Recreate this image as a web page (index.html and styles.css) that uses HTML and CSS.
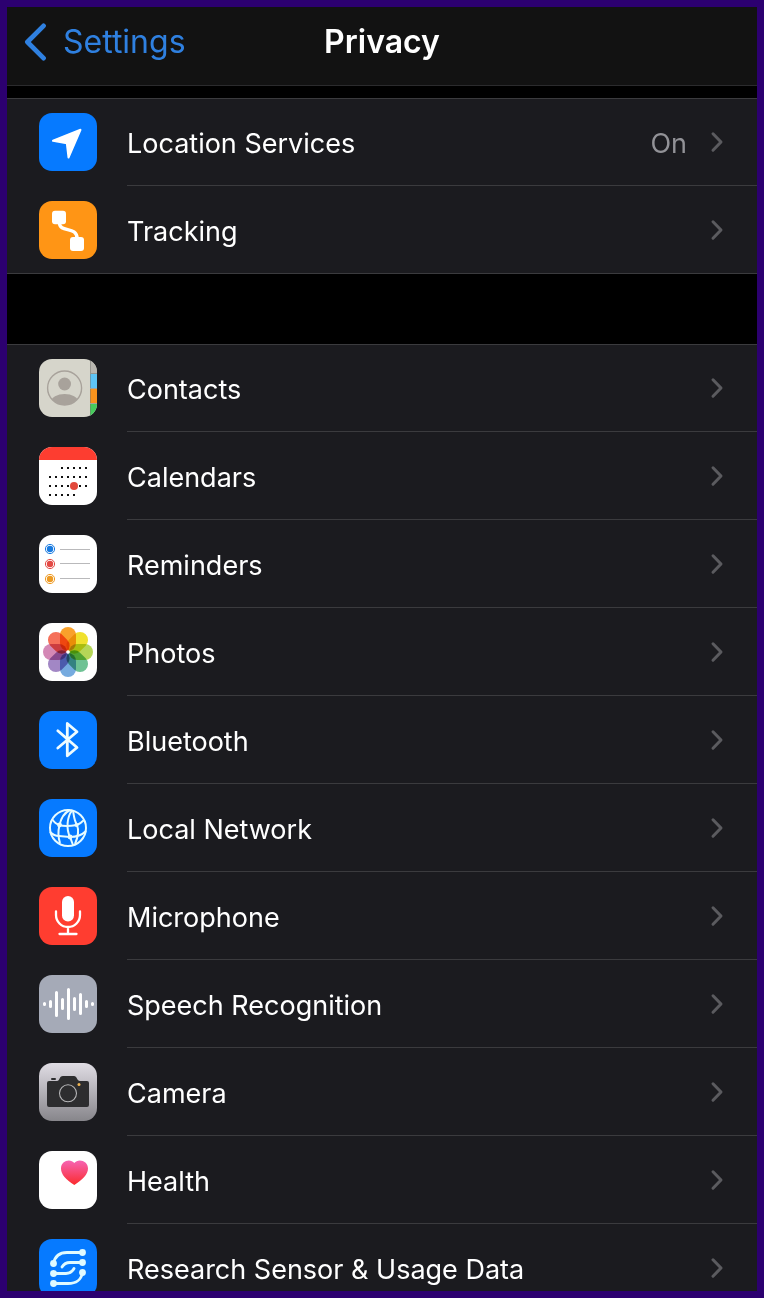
FILE: index.html
```html
<!DOCTYPE html>
<html lang="en">
<head>
  <meta charset="UTF-8" />
  <meta name="viewport" content="width=device-width, initial-scale=1" />
  <title>Privacy</title>
  <link rel="stylesheet" href="styles.css">
</head>
<body>

<svg class="defs" aria-hidden="true">
  <symbol id="chevron" viewBox="0 0 14 22">
    <path d="M3 2.8 L11 11 L3 19.2" fill="none" stroke="currentColor" stroke-width="3" stroke-linecap="round" stroke-linejoin="round"/>
  </symbol>
</svg>

<div class="screen">
  <header class="navbar">
    <a class="back" href="#">
      <svg class="back-icon" viewBox="0 0 24 40" aria-hidden="true">
        <path d="M21 3 L4 20 L21 37" fill="none" stroke="currentColor" stroke-width="5" stroke-linecap="round" stroke-linejoin="round"/>
      </svg>
      <span>Settings</span>
    </a>
    <h1 class="title">Privacy</h1>
  </header>

  <main class="content">
    <ul class="group">
      <li><a class="row" href="#">
        <svg class="icon" viewBox="0 0 58 58" aria-hidden="true">
          <rect width="58" height="58" fill="#067aff"/>
          <path d="M41.5 16.8 L14 27.8 L27.8 30.2 L29.5 44.5 Z" fill="#fff" stroke="#fff" stroke-width="2" stroke-linejoin="round"/>
        </svg>
        <span class="body"><span class="label">Location Services</span><span class="value">On</span><svg class="chevron"><use href="#chevron"/></svg></span>
      </a></li>
      <li><a class="row" href="#">
        <svg class="icon" viewBox="0 0 58 58" aria-hidden="true">
          <rect width="58" height="58" fill="#ff9515"/>
          <rect x="13" y="9.7" width="14" height="13.6" rx="3" fill="#fff"/>
          <rect x="31" y="36" width="14" height="14" rx="3" fill="#fff"/>
          <path d="M20.5 22 C20.5 32 38 25 38 37" fill="none" stroke="#fff" stroke-width="3.4"/>
        </svg>
        <span class="body"><span class="label">Tracking</span><svg class="chevron"><use href="#chevron"/></svg></span>
      </a></li>
    </ul>

    <ul class="group">
      <li><a class="row" href="#">
        <svg class="icon" viewBox="0 0 58 58" aria-hidden="true">
          <clipPath id="avatar"><circle cx="25.6" cy="29" r="17"/></clipPath>
          <rect width="58" height="58" fill="#d6d5cb"/>
          <rect x="51" width="7" height="15" fill="#b9b7b0"/>
          <rect x="51" y="15" width="7" height="14" fill="#5ec4f5"/>
          <rect x="51" y="30" width="7" height="14" fill="#f8931d"/>
          <rect x="51" y="45" width="7" height="13" fill="#46cc5c"/>
          <path d="M51.5 0 V58 M51 14.5 H58 M51 29.5 H58 M51 44.5 H58" stroke="#77766f" stroke-width="1" opacity=".5"/>
          <circle cx="25.6" cy="29" r="17" fill="none" stroke="#a8a29b" stroke-width="1.4"/>
          <circle cx="25.6" cy="25" r="6.4" fill="#a8a29b"/>
          <ellipse cx="25.6" cy="43" rx="13.5" ry="8" fill="#a8a29b" clip-path="url(#avatar)"/>
        </svg>
        <span class="body"><span class="label">Contacts</span><svg class="chevron"><use href="#chevron"/></svg></span>
      </a></li>
      <li><a class="row" href="#">
        <svg class="icon" viewBox="0 0 58 58" aria-hidden="true">
          <rect width="58" height="58" fill="#fff"/>
          <rect width="58" height="13" fill="#fd3d30"/>
          <path d="M22 21 H48 M10 30 H48 M10 39 H48 M10 48 H36" stroke="#111" stroke-width="2" stroke-dasharray="2 4"/>
          <circle cx="35" cy="39" r="4" fill="#e2493c"/>
        </svg>
        <span class="body"><span class="label">Calendars</span><svg class="chevron"><use href="#chevron"/></svg></span>
      </a></li>
      <li><a class="row" href="#">
        <svg class="icon" viewBox="0 0 58 58" aria-hidden="true">
          <rect width="58" height="58" fill="#fff"/>
          <g stroke-width="1">
            <circle cx="11" cy="14" r="4.6" fill="none" stroke="#1a7be0"/><circle cx="11" cy="14" r="3.2" fill="#1a7be0"/>
            <circle cx="11" cy="29" r="4.6" fill="none" stroke="#e34a45"/><circle cx="11" cy="29" r="3.2" fill="#e34a45"/>
            <circle cx="11" cy="44" r="4.6" fill="none" stroke="#ed9a23"/><circle cx="11" cy="44" r="3.2" fill="#ed9a23"/>
          </g>
          <path d="M21 14.5 H51 M21 28.5 H51 M21 43.5 H51" stroke="#b9b9bb" stroke-width="1"/>
        </svg>
        <span class="body"><span class="label">Reminders</span><svg class="chevron"><use href="#chevron"/></svg></span>
      </a></li>
      <li><a class="row" href="#">
        <svg class="icon" viewBox="0 0 58 58" aria-hidden="true">
          <rect width="58" height="58" fill="#fff"/>
          <g class="petals" transform="translate(29 29)">
            <rect x="-8" y="-25" width="16" height="24" rx="8" fill="#f9a12b"/>
            <rect x="-8" y="-25" width="16" height="24" rx="8" fill="#f0e12e" transform="rotate(45)"/>
            <rect x="-8" y="-25" width="16" height="24" rx="8" fill="#b5d657" transform="rotate(90)"/>
            <rect x="-8" y="-25" width="16" height="24" rx="8" fill="#6fc294" transform="rotate(135)"/>
            <rect x="-8" y="-25" width="16" height="24" rx="8" fill="#76abdf" transform="rotate(180)"/>
            <rect x="-8" y="-25" width="16" height="24" rx="8" fill="#a287c5" transform="rotate(225)"/>
            <rect x="-8" y="-25" width="16" height="24" rx="8" fill="#d488b5" transform="rotate(270)"/>
            <rect x="-8" y="-25" width="16" height="24" rx="8" fill="#f5705a" transform="rotate(315)"/>
          </g>
          <circle cx="29" cy="29" r="1.8" fill="#fff"/>
        </svg>
        <span class="body"><span class="label">Photos</span><svg class="chevron"><use href="#chevron"/></svg></span>
      </a></li>
      <li><a class="row" href="#">
        <svg class="icon" viewBox="0 0 58 58" aria-hidden="true">
          <rect width="58" height="58" fill="#067aff"/>
          <path d="M18.8 19.8 L38 36.5 L28.3 44.8 V12.5 L38 20.8 L18.8 37" fill="none" stroke="#effcff" stroke-width="2.8" stroke-linecap="round" stroke-linejoin="round"/>
        </svg>
        <span class="body"><span class="label">Bluetooth</span><svg class="chevron"><use href="#chevron"/></svg></span>
      </a></li>
      <li><a class="row" href="#">
        <svg class="icon" viewBox="0 0 58 58" aria-hidden="true">
          <rect width="58" height="58" fill="#067aff"/>
          <g fill="none" stroke="#e6fbff" stroke-width="2">
            <circle cx="29" cy="29" r="18"/>
            <path d="M31 11 C25 14 22 19 20.5 26 C19 32 19 38 21 44"/>
            <path d="M33 11.500 C28 18 27 30 31 38 L34 46"/>
            <path d="M34 11.500 C35 17 35 21 38 26 C40 31 39 38 36 45"/>
            <path d="M13 20 C15 23 17 25 20.500 26 C26 28 32 27 38 26 C41 25 43 23 45 21"/>
            <path d="M11 33 C14 36 17 37 20 37 L31 38 C37 38 43 36 47 32"/>
          </g>
          <g fill="#e6fbff">
            <circle cx="20.5" cy="26" r="2.4"/>
            <circle cx="37.5" cy="26" r="2"/>
            <circle cx="31" cy="38" r="2.4"/>
          </g>
        </svg>
        <span class="body"><span class="label">Local Network</span><svg class="chevron"><use href="#chevron"/></svg></span>
      </a></li>
      <li><a class="row" href="#">
        <svg class="icon" viewBox="0 0 58 58" aria-hidden="true">
          <rect width="58" height="58" fill="#ff3d30"/>
          <rect x="23" y="9" width="12" height="25.5" rx="6" fill="#fff"/>
          <path d="M17 24.5 V28 A12 12 0 0 0 41 28 V24.5 M29 40 V47 M20.5 47 H37.5" fill="none" stroke="#fff" stroke-width="2.3" stroke-linecap="round"/>
        </svg>
        <span class="body"><span class="label">Microphone</span><svg class="chevron"><use href="#chevron"/></svg></span>
      </a></li>
      <li><a class="row" href="#">
        <svg class="icon" viewBox="0 0 58 58" aria-hidden="true">
          <rect width="58" height="58" fill="#a5aab7"/>
          <path d="M5.5 28.5 V29.5 M11.5 26.5 V31.5 M17.5 17.5 V40.5 M23.5 24.5 V33.5 M29.5 14.5 V43.5 M35.5 23.5 V34.5 M41.5 19.5 V38.5 M47.5 26.5 V31.5 M53.5 28.5 V29.5" stroke="#fff" stroke-width="3" stroke-linecap="round"/>
        </svg>
        <span class="body"><span class="label">Speech Recognition</span><svg class="chevron"><use href="#chevron"/></svg></span>
      </a></li>
      <li><a class="row" href="#">
        <svg class="icon" viewBox="0 0 58 58" aria-hidden="true">
          <linearGradient id="metal" x2="0" y2="1"><stop offset="0" stop-color="#e0dde4"/><stop offset="1" stop-color="#87868b"/></linearGradient>
          <rect width="58" height="58" fill="url(#metal)"/>
          <path d="M10 18 H18 C21 18 20 13 24 13 H35 C38 13 38 18 41 18 H48 Q50 18 50 20 V42 Q50 44 48 44 H10 Q8 44 8 42 V20 Q8 18 10 18 Z" fill="#2d2d2f"/>
          <rect x="12" y="15" width="5" height="2" rx="1" fill="#2d2d2f"/>
          <circle cx="29" cy="30.3" r="8.5" fill="none" stroke="#b4b4b6" stroke-width="1.1"/>
          <circle cx="40" cy="21.5" r="1.5" fill="#f0b552"/>
        </svg>
        <span class="body"><span class="label">Camera</span><svg class="chevron"><use href="#chevron"/></svg></span>
      </a></li>
      <li><a class="row" href="#">
        <svg class="icon" viewBox="0 0 58 58" aria-hidden="true">
          <linearGradient id="heart" x2="0" y2="1"><stop offset="0" stop-color="#f664b4"/><stop offset="1" stop-color="#fb2b2d"/></linearGradient>
          <rect width="58" height="58" fill="#fff"/>
          <path d="M35.3 34 C27 28.5 22 23.5 22 17.5 C22 9.5 31.5 7 35.3 12 C39.1 7 49 9.5 49 17.5 C49 23.5 43.5 28.5 35.3 34 Z" fill="url(#heart)"/>
        </svg>
        <span class="body"><span class="label">Health</span><svg class="chevron"><use href="#chevron"/></svg></span>
      </a></li>
      <li><a class="row" href="#">
        <svg class="icon" viewBox="0 0 58 58" aria-hidden="true">
          <rect width="58" height="58" fill="#067aff"/>
          <path d="M14.5 24.5 C16 17 20 13.5 28 13.5 H43.5 M23 28 C25 24.5 27 23.5 31 23.5 H43.5 M14.5 34.5 H27 C31 34.5 33 33 35 29.5 M14.5 44.5 H29 C38 44.5 42 41 43.5 33.5" fill="none" stroke="#dffaff" stroke-width="2.8" stroke-linecap="round"/>
          <g fill="#dffaff">
            <circle cx="14.5" cy="24.5" r="3.4"/><circle cx="43.5" cy="13.5" r="3.4"/>
            <circle cx="43.5" cy="23.5" r="3.4"/><circle cx="14.5" cy="34.5" r="3.4"/>
            <circle cx="14.5" cy="44.5" r="3.4"/><circle cx="43.5" cy="33.5" r="3.4"/>
          </g>
        </svg>
        <span class="body"><span class="label">Research Sensor &amp; Usage Data</span><svg class="chevron"><use href="#chevron"/></svg></span>
      </a></li>
    </ul>
  </main>
</div>

</body>
</html>
```

FILE: styles.css
```css
:root {
  --frame-color: #2c0070;
  --bar-bg: #121212;
  --row-bg: #1b1b1f;
  --line-color: #3b3b3e;
  --link-color: #2f80e0;
  --muted-color: #929297;
  --chevron-color: #5b5b5f;
}

* {
  box-sizing: border-box;
}

body {
  margin: 0;
  background: #000;
  color: #fff;
  font-family: Inter, "Liberation Sans", sans-serif;
}

.defs {
  display: none;
}

.screen {
  display: flex;
  flex-direction: column;
  height: 100vh;
  border: 7px solid var(--frame-color);
  overflow: hidden;
}

.navbar {
  display: grid;
  grid-template-columns: 1fr auto 1fr;
  align-items: center;
  flex: none;
  padding: 16px 16px 24px;
  background: var(--bar-bg);
  border-bottom: 1px solid #2b2b2d;
  line-height: 38px;
}

.back {
  display: flex;
  align-items: center;
  gap: 16px;
  color: var(--link-color);
  font-size: 32px;
  text-decoration: none;
}

.back-icon {
  width: 24px;
  height: 38px;
}

.title {
  margin: 0;
  font-size: 32px;
  font-weight: 600;
}

.content {
  flex: 1;
  min-height: 0;
  padding-top: 12px;
  overflow-y: auto;
  scrollbar-width: none;
}

.group {
  margin: 0 0 70px;
  padding: 0;
  list-style: none;
  background: var(--row-bg);
  box-shadow: inset 0 1px var(--line-color), inset 0 -1px var(--line-color);
}

.row {
  display: flex;
  align-items: center;
  gap: 30px;
  height: 88px;
  padding-left: 32px;
  color: inherit;
  text-decoration: none;
}

.icon {
  flex: none;
  width: 58px;
  height: 58px;
  border-radius: 13px;
}

.petals {
  isolation: isolate;
}

.petals rect {
  mix-blend-mode: multiply;
}

.body {
  display: flex;
  align-items: center;
  flex: 1;
  align-self: stretch;
  padding-right: 33px;
  border-bottom: 1px solid var(--line-color);
}

li:last-child .body {
  border-bottom-color: transparent;
}

.label,
.value {
  padding-top: 4px;
  font-size: 27px;
  line-height: 36px;
}

.label {
  flex: 1;
}

.value {
  margin-right: 23px;
  color: var(--muted-color);
}

.chevron {
  width: 14px;
  height: 22px;
  color: var(--chevron-color);
}
```
